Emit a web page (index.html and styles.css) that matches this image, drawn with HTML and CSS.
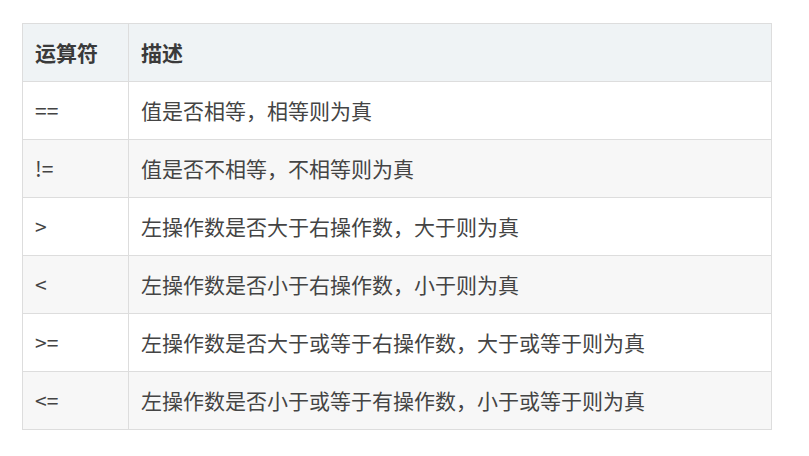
FILE: index.html
```html
<!DOCTYPE html>
<html lang="zh-CN">
<head>
<meta charset="utf-8">
<link rel="stylesheet" href="styles.css">
</head>
<body>
<table class="ops">
  <thead>
    <tr><th class="c1">运算符</th><th>描述</th></tr>
  </thead>
  <tbody>
    <tr><td class="c1">==</td><td>值是否相等，相等则为真</td></tr>
    <tr><td class="c1">!=</td><td>值是否不相等，不相等则为真</td></tr>
    <tr><td class="c1">&gt;</td><td>左操作数是否大于右操作数，大于则为真</td></tr>
    <tr><td class="c1">&lt;</td><td>左操作数是否小于右操作数，小于则为真</td></tr>
    <tr><td class="c1">&gt;=</td><td>左操作数是否大于或等于右操作数，大于或等于则为真</td></tr>
    <tr><td class="c1">&lt;=</td><td>左操作数是否小于或等于有操作数，小于或等于则为真</td></tr>
  </tbody>
</table>
</body>
</html>
```
FILE: styles.css
```css
html, body {
  margin: 0;
  padding: 0;
  background: #ffffff;
}
body {
  padding: 23px 22px;
  font-family: "Noto Sans CJK SC", "Microsoft YaHei", sans-serif;
  color: #444444;
}
.ops {
  border-collapse: collapse;
  width: 750px;
  font-size: 21px;
}
.ops th, .ops td {
  border: 1px solid #dddddd;
  height: 58px;
  padding: 0 12px;
  text-align: left;
  vertical-align: middle;
  line-height: 1;
  box-sizing: border-box;
}
.ops th {
  background: #eff3f5;
  font-weight: bold;
  color: #3a3a3a;
}
.ops .c1 {
  width: 106px;
}
.ops tbody tr:nth-child(even) td {
  background: #f7f7f7;
}
```
